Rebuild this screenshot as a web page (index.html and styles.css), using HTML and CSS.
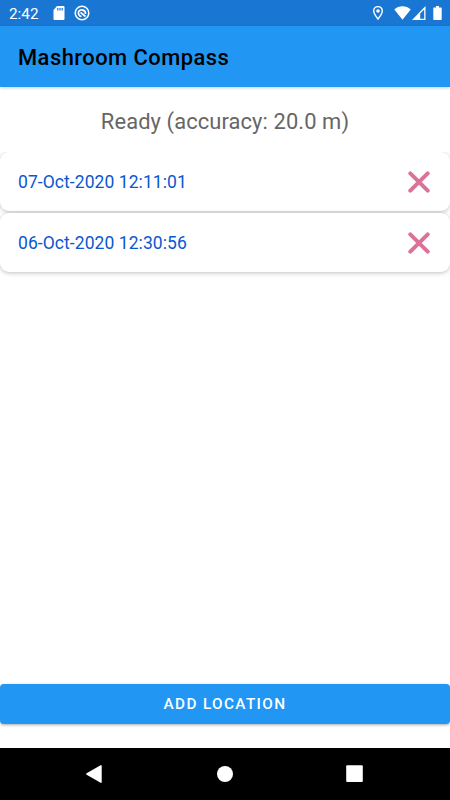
FILE: index.html
```html
<!DOCTYPE html>
<html lang="en">
<head>
    <meta charset="UTF-8">
    <meta name="viewport" content="width=device-width, initial-scale=1.0">
    <title>Mashroom Compass</title>
    <link rel="stylesheet" href="styles.css">
</head>
<body>
    <div class="screen">
        <div class="status-bar">
            <span class="clock">2:42</span>
            <svg class="icon-sd" width="12" height="14" viewBox="0 0 12 14">
                <path fill="#fff" fill-rule="evenodd" d="M4 0h6.500a1 1 0 0 1 1 1v12a1 1 0 0 1-1 1h-9a1 1 0 0 1-1-1V4zM4.200 2v2.500h1.200V2zM6.400 2v2.500h1.200V2zM8.600 2v2.500h1.200V2z"/>
            </svg>
            <svg class="icon-sync" width="16" height="16" viewBox="0 0 16 16" fill="none" stroke="#fff">
                <circle cx="8" cy="8" r="6.800" stroke-width="1.500"/>
                <path stroke-width="1.700" d="M7.500 11.500a3.700 3.700 0 0 1-2.700-5.300A3.800 3.800 0 0 1 11.500 9M6.500 7.300l5 4.200"/>
            </svg>
            <span class="spacer"></span>
            <svg class="icon-place" width="10" height="14" viewBox="0 0 10 14">
                <path fill="none" stroke="#fff" stroke-width="1.400" d="M5 13C3 10.300.700 7.500.700 4.900a4.300 4.300 0 0 1 8.600 0C9.300 7.500 7 10.300 5 13z"/>
                <circle cx="5" cy="5" r="1.800" fill="#fff"/>
            </svg>
            <svg class="icon-wifi" width="17" height="14" viewBox="0 0 17 14">
                <path fill="#fff" d="M8.500 13.700L.300 3.500C5-.900 12-.900 16.700 3.500z"/>
            </svg>
            <svg class="icon-signal" width="14" height="14" viewBox="0 0 14 14">
                <path fill="#fff" fill-rule="evenodd" d="M13.500 0v14H0zM12.200 3.400L8.200 7.400v5.300h4z"/>
            </svg>
            <svg class="icon-battery" width="9" height="14" viewBox="0 0 9 14">
                <path fill="#fff" d="M3 0h3v1.400h2a.700.700 0 0 1 .700.700v11.200a.700.700 0 0 1-.700.700H1a.700.700 0 0 1-.700-.700V2.100A.700.700 0 0 1 1 1.400h2z"/>
            </svg>
        </div>

        <div class="app-bar">
            <h1>Mashroom Compass</h1>
        </div>

        <div class="content">
            <p class="message">Ready (accuracy: 20.0 m)</p>

            <div class="list">
                <div class="card">
                    <span class="date">07-Oct-2020 12:11:01</span>
                    <svg class="remove" width="22" height="22" viewBox="0 0 22 22">
                        <path d="M2.300 2.300l17.400 17.400M19.700 2.300L2.300 19.700"/>
                    </svg>
                </div>
                <div class="card">
                    <span class="date">06-Oct-2020 12:30:56</span>
                    <svg class="remove" width="22" height="22" viewBox="0 0 22 22">
                        <path d="M2.300 2.300l17.400 17.400M19.700 2.300L2.300 19.700"/>
                    </svg>
                </div>
            </div>

            <button type="button" class="btn">ADD LOCATION</button>
        </div>

        <div class="nav-bar">
            <svg width="18" height="20" viewBox="0 0 18 20">
                <path fill="#fff" d="M.6 9.300L14.600 1.200a.7.7 0 0 1 1.100.6v16.400a.7.7 0 0 1-1.100.6L.6 10.700a.8.8 0 0 1 0-1.400z"/>
            </svg>
            <svg width="18" height="20" viewBox="0 0 18 20">
                <circle cx="9" cy="10" r="8" fill="#fff"/>
            </svg>
            <svg width="18" height="20" viewBox="0 0 18 20">
                <rect x=".2" y="1.300" width="16.600" height="16.800" rx="1" fill="#fff"/>
            </svg>
        </div>
    </div>
</body>
</html>
```
FILE: styles.css
```css
body {
    margin: 0;
    font-family: Roboto, sans-serif;
    background-color: #fff;
}
.screen {
    display: flex;
    flex-direction: column;
    width: 450px;
    height: 800px;
    overflow: hidden;
}
.status-bar {
    display: flex;
    align-items: center;
    box-sizing: border-box;
    height: 26px;
    padding: 0 8px 0 9px;
    background-color: #1976d2;
    color: #fff;
}
.clock {
    width: 44px;
    font-size: 15.3px;
    line-height: 29px;
    height: 26px;
}
.icon-sync {
    margin-left: 9px;
}
.spacer {
    flex: 1;
}
.icon-wifi {
    margin-left: 11px;
}
.icon-signal {
    margin-left: 1px;
}
.icon-battery {
    margin-left: 7px;
}
.app-bar {
    display: flex;
    align-items: center;
    height: 61px;
    padding: 0 18px;
    background-color: #2196f3;
    box-shadow: 0 1px 3px rgba(0, 0, 0, 0.2);
    z-index: 1;
}
h1 {
    margin: 2px 0 0;
    font-size: 21.9px;
    font-weight: 500;
    letter-spacing: 0.48px;
    color: #000;
}
.content {
    display: flex;
    flex-direction: column;
    flex: 1;
}
.message {
    margin: 0;
    height: 65px;
    line-height: 69px;
    font-size: 21.9px;
    letter-spacing: 0.1px;
    text-align: center;
    color: #666;
}
.list {
    display: flex;
    flex-direction: column;
    gap: 2px;
    flex: 1;
    overflow: hidden;
}
.card {
    display: flex;
    align-items: center;
    justify-content: space-between;
    height: 59px;
    padding: 0 20px 0 18px;
    border-radius: 9px;
    background-color: #fff;
    box-shadow: 0 1px 4px rgba(0, 0, 0, 0.25);
}
.date {
    font-size: 17.5px;
    letter-spacing: 0.07px;
    color: #0b57d0;
}
.remove {
    fill: none;
    stroke: #db7299;
    stroke-width: 4;
    stroke-linecap: round;
}
.btn {
    height: 40px;
    margin: 0 0 24px;
    padding: 0;
    border: none;
    border-radius: 4px;
    background-color: #2196f3;
    box-shadow: 0 1px 3px rgba(0, 0, 0, 0.35);
    color: #fff;
    font-family: inherit;
    font-size: 15.3px;
    font-weight: 500;
    letter-spacing: 1.37px;
}
.nav-bar {
    display: flex;
    align-items: center;
    justify-content: center;
    gap: 112px;
    height: 52px;
    background-color: #000;
}
```
